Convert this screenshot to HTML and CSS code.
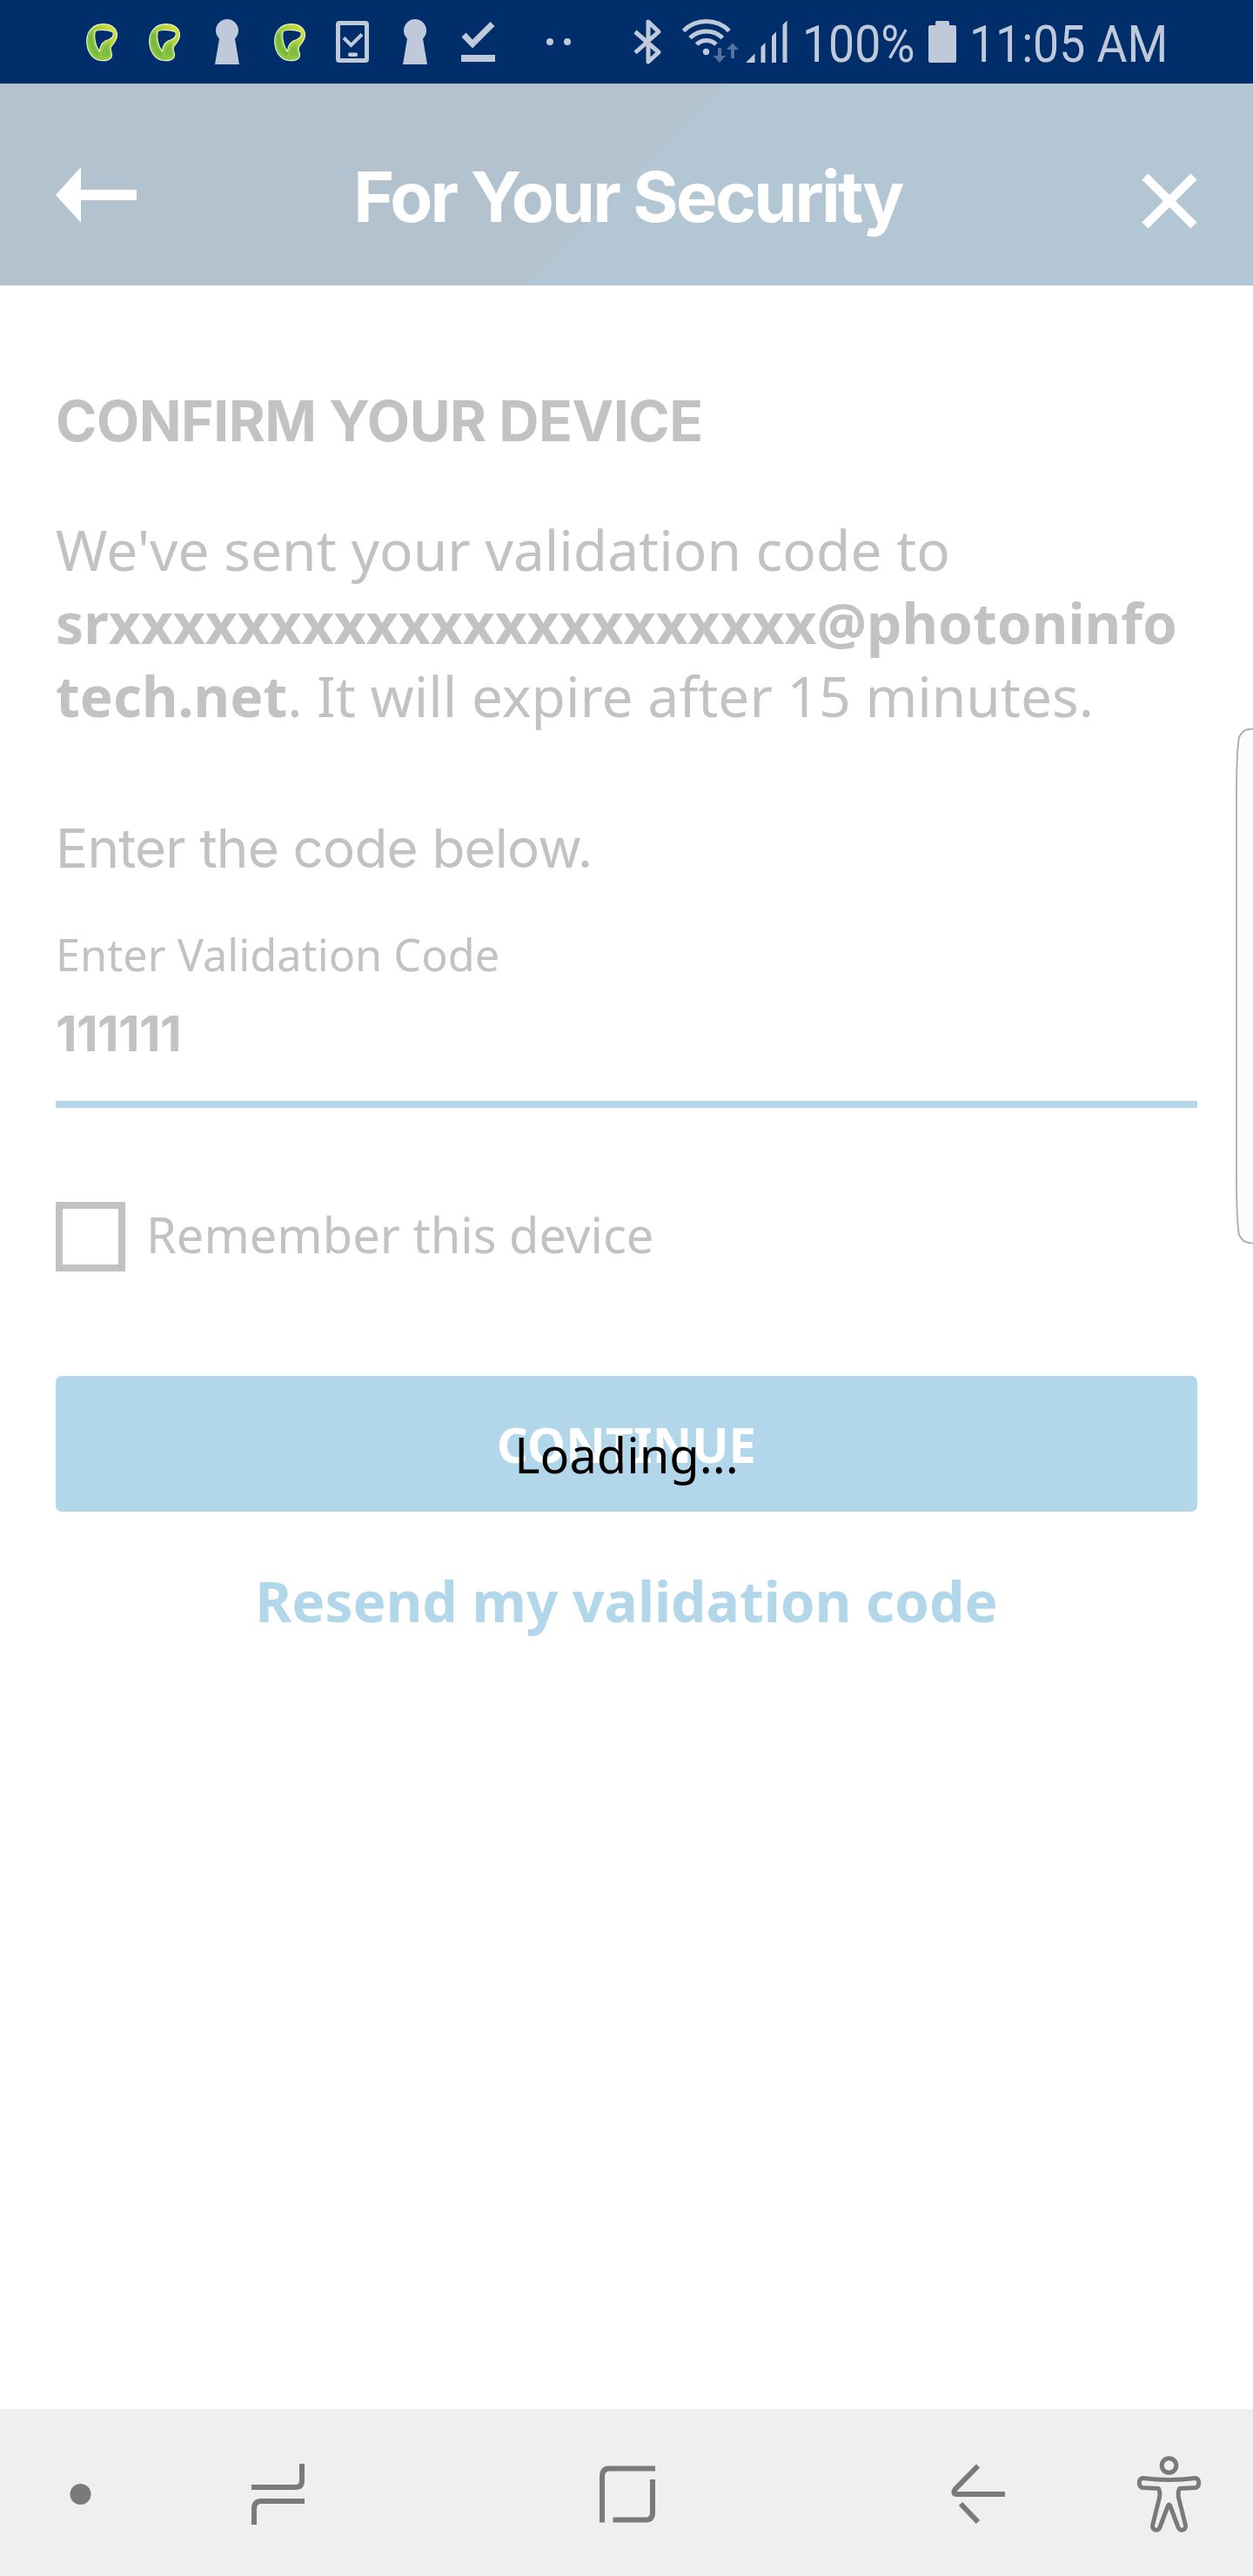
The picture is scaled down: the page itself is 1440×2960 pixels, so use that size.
FILE: index.html
```html
<!DOCTYPE html>
<html lang="en">
<head>
<meta charset="utf-8">
<title>For Your Security</title>
<link rel="stylesheet" href="styles.css">
</head>
<body>
<div class="screen">
  <div class="status-bar">
    <svg class="status-icons" width="922" height="96" viewBox="0 0 922 96" aria-hidden="true">
      <defs>
        <linearGradient id="lime" x1="0" y1="1" x2="1" y2="0">
          <stop offset="0" stop-color="#7fc043"/><stop offset=".5" stop-color="#9aca3c"/><stop offset="1" stop-color="#e4e52f"/>
        </linearGradient>
        <g id="ribbon">
          <path fill="url(#lime)" fill-rule="evenodd" stroke="#e6f2d0" stroke-width="1.200" stroke-linejoin="round" d="M19 .7C28 .5 35.500 5 35.500 13C35.500 20 31 23 28.500 27C27 31 30 33 29.500 37C29 42 22 43 17 42.500C7 41.500 .7 32 .7 20C.7 9 8 1 19 .7ZM10.500 8.500C16 7 26 7 31 10C32 15 30 17 26 18.500C20 20 16 24 15.500 32C10.500 26 8.500 15 10.500 8.500Z"/>
          <path d="M5 12C4 22 8 31 15 36" fill="none" stroke="#76ba3f" stroke-width="4.500"/>
          <path d="M26 23C20 26 18 31 18.500 37C22 39 26 38 28 35C25 31 26 27 26 23Z" fill="#7dbf43"/>
        </g>
        <path id="keyhole" d="M9.500 52H0L5 22.500A13 13 0 1 1 23 22.500L28 52Z"/>
      </defs>
      <use href="#ribbon" x="99" y="27"/>
      <use href="#ribbon" x="171" y="27"/>
      <use href="#ribbon" x="315" y="27"/>
      <g fill="#bfc9da">
        <use href="#keyhole" x="247" y="22"/>
        <use href="#keyhole" x="463" y="22"/>
        <path d="M530.500 42.500L535.500 37.500L543 45.500L563.500 25L568.500 30L543 55.500Z"/>
        <path d="M530 63H569V71H530Z"/>
        <circle cx="632" cy="48" r="4"/><circle cx="652" cy="48" r="4"/>
        <rect x="400" y="60.500" width="11" height="4.500" rx="2"/>
        <path d="M857 72L867.500 61.500V72ZM874.500 54L879.500 49V72H874.500ZM887 41.500L892 36.500V72H887ZM899.500 28.500L904.500 23.500V72H899.500Z"/>
        <circle cx="811.500" cy="59.500" r="3.700"/>
      </g>
      <g fill="none" stroke="#bfc9da">
        <rect x="388.500" y="26.500" width="33" height="43" rx="1.500" stroke-width="5"/>
        <path d="M395 43.500L403.500 52L416 39.500" stroke-width="4"/>
        <path d="M730 36.500L757 60L745 71V25L757 36.500L730 60.500" stroke-width="5" stroke-linejoin="round"/>
        <path d="M785.500 35.500A37 37 0 0 1 838 35.500M793 43.500A27 27 0 0 1 830.500 43.500M800.500 51A16 16 0 0 1 823 51" stroke-width="5"/>
      </g>
      <path fill="#54709c" d="M825 55H829V64H834L827 72L819.500 64H825ZM840 67V57H835L842 49.500L849 57H844V67Z"/>
    </svg>
    <span class="status-text battery-level">100%</span>
    <svg class="battery" width="32" height="48" viewBox="0 0 32 48" aria-hidden="true"><path fill="#bfc9da" d="M10 0H22Q24 0 24 2V5H30Q32 5 32 7V46Q32 48 30 48H2Q0 48 0 46V7Q0 5 2 5H8V2Q8 0 10 0Z"/></svg>
    <span class="status-text clock">11:05 AM</span>
  </div>
  <header class="header">
    <svg class="back" width="93" height="64" viewBox="0 0 93 64" aria-label="Back"><path fill="#fff" d="M0 32L29 0V26H93V38H29V64Z"/></svg>
    <h1 class="title">For Your Security</h1>
    <svg class="close" width="64" height="64" viewBox="0 0 64 64" aria-label="Close"><path d="M4 4L60 60M60 4L4 60" stroke="#fff" stroke-width="10"/></svg>
  </header>
  <main class="content">
    <h2 class="heading">CONFIRM YOUR DEVICE</h2>
    <p class="message">We've sent your validation code to<br><b>srxxxxxxxxxxxxxxxxxxxxxx@photoninfo<br>tech.net</b>. It will expire after 15 minutes.</p>
    <p class="prompt">Enter the code below.</p>
    <div class="field">
      <div class="label">Enter Validation Code</div>
      <div class="value">111111</div>
    </div>
    <div class="remember"><span class="checkbox"></span><span class="remember-label">Remember this device</span></div>
    <div class="button">CONTINUE<span class="loading">Loading...</span></div>
    <div class="resend">Resend my validation code</div>
  </main>
  <nav class="nav">
    <svg width="1440" height="192" viewBox="0 2768 1440 192" aria-hidden="true">
      <circle cx="92.500" cy="2866" r="12" fill="#7a7a7a"/>
      <g fill="none" stroke="#7a7a7a" stroke-width="6">
        <path d="M289 2858H340Q347 2858 347 2850V2831M350 2874H300Q292 2874 292 2883V2901"/>
        <path d="M692 2898.500V2846Q692 2836.500 700 2836.500H753M704.500 2895.500H742Q750 2895.500 750 2887V2849"/>
        <path d="M1124 2833.500L1098 2860Q1094 2866 1100 2866H1155M1104 2877L1124 2898"/>
      </g>
      <g fill="none" stroke="#7a7a7a" stroke-width="5" stroke-linejoin="round">
        <circle cx="1343.500" cy="2833" r="8.300"/>
        <path d="M1313 2847.500Q1343.500 2851.500 1374 2847.500C1379 2848 1379 2857.500 1374 2858.500L1355.500 2859.500Q1353 2865 1355 2872L1362.500 2902C1363 2908 1355.500 2909 1354 2904L1345 2880Q1343.500 2876 1342 2880L1333 2904C1331.500 2909 1324 2908 1324.500 2902L1332 2872Q1334 2865 1331.500 2859.500L1313 2858.500C1308 2857.500 1308 2848 1313 2847.500Z"/>
      </g>
    </svg>
  </nav>
  <svg class="edge-handle" width="20" height="594" viewBox="0 0 20 594" aria-hidden="true"><path d="M21 1.500C12 1.500 8 3.500 4 11C2 22 1 40 1 80V514C1 554 2 572 4 583C8 590.500 12 592.500 21 592.500" fill="#fcfcfc" stroke="#b2b2b2" stroke-width="2"/></svg>
</div>
</body>
</html>
```
FILE: styles.css
```css
* { box-sizing: border-box; }
body, h1, h2, p { margin: 0; }
body { background: #fff; font-family: "Noto Sans", sans-serif; }
.screen { position: relative; display: flex; flex-direction: column; width: 1440px; height: 2960px; overflow: hidden; }
.status-bar { display: flex; align-items: center; height: 96px; background: #002e6b; color: #bfc9da; }
.status-bar > * { flex: none; }
.status-text { height: 96px; padding-top: 5px; font: 60px/91px Roboto, sans-serif; white-space: nowrap; transform: scaleX(.892); transform-origin: left; }
.battery-level { width: 145px; }
.clock { margin-left: 15px; }
.header { display: flex; align-items: flex-start; height: 232px; padding: 96px 64px 0; background: linear-gradient(135deg, #b2c2cf 0 50%, #b2c6d3 50%); }
.title { flex: 1; margin-top: -14px; padding-right: 26px; font: 700 80px/96px Inter, sans-serif; letter-spacing: -2.7px; color: #fff; text-align: center; white-space: nowrap; }
.close { margin-top: 7px; }
.content { flex: 1; padding: 116px 64px 0; color: #c2c2c2; }
.heading { font: 700 64px/80px Inter, sans-serif; letter-spacing: -.45px; white-space: nowrap; }
.message { margin-top: 66px; font-size: 64px; line-height: 84px; white-space: nowrap; }
.prompt { margin-top: 93px; font: 62px/80px Inter, sans-serif; letter-spacing: -.85px; }
.field { margin-top: 50px; height: 208px; border-bottom: 8px solid #b2d7ea; }
.label { font-size: 50.4px; line-height: 64px; }
.value { margin-top: 27px; font: 700 57px/64px Inter, sans-serif; letter-spacing: -.6px; }
.remember { display: flex; gap: 24px; height: 80px; margin-top: 108px; }
.checkbox { width: 80px; height: 80px; border: 8px solid #c2c2c2; }
.remember-label { font-size: 56px; line-height: 74px; }
.button { position: relative; height: 156px; margin-top: 120px; border-radius: 7px; background: #b2d7ea; color: #fff; font-size: 56px; font-weight: 700; line-height: 156px; text-align: center; }
.loading { position: absolute; inset: 50px 0 auto; color: #000; font-weight: 400; line-height: 80px; }
.resend { margin-top: 61px; color: #b2d7ea; font-size: 64px; font-weight: 700; line-height: 84px; text-align: center; }
.nav { height: 192px; background: #efefef; }
.nav svg { display: block; }
.edge-handle { position: absolute; right: 0; top: 836px; }
```
